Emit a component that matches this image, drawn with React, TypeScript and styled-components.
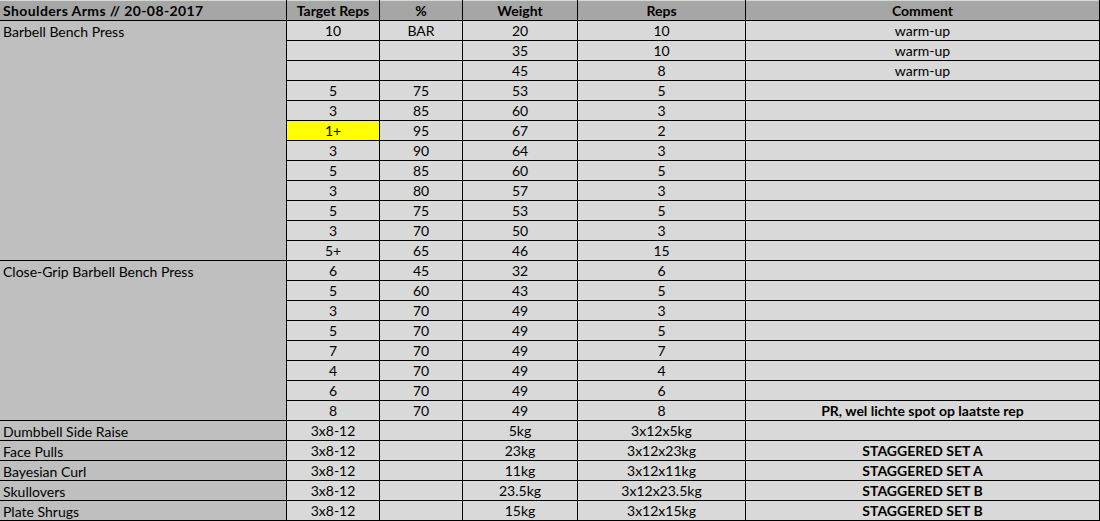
import React from "react";
import styled, { createGlobalStyle } from "styled-components";

const GlobalStyle = createGlobalStyle`
  html, body {
    margin: 0;
    padding: 0;
    background: #ffffff;
  }
  body {
    font-family: Lato, "Liberation Sans", sans-serif;
    font-size: 14px;
    color: #000;
  }
`;

type SetRow = {
  target: string;
  pct: string;
  weight: string;
  reps: string;
  comment?: string;
  highlight?: boolean;
  bold?: boolean;
};

type Exercise = {
  name: string;
  sets: SetRow[];
};

const exercises: Exercise[] = [
  {
    name: "Barbell Bench Press",
    sets: [
      { target: "10", pct: "BAR", weight: "20", reps: "10", comment: "warm-up" },
      { target: "", pct: "", weight: "35", reps: "10", comment: "warm-up" },
      { target: "", pct: "", weight: "45", reps: "8", comment: "warm-up" },
      { target: "5", pct: "75", weight: "53", reps: "5" },
      { target: "3", pct: "85", weight: "60", reps: "3" },
      { target: "1+", pct: "95", weight: "67", reps: "2", highlight: true },
      { target: "3", pct: "90", weight: "64", reps: "3" },
      { target: "5", pct: "85", weight: "60", reps: "5" },
      { target: "3", pct: "80", weight: "57", reps: "3" },
      { target: "5", pct: "75", weight: "53", reps: "5" },
      { target: "3", pct: "70", weight: "50", reps: "3" },
      { target: "5+", pct: "65", weight: "46", reps: "15" },
    ],
  },
  {
    name: "Close-Grip Barbell Bench Press",
    sets: [
      { target: "6", pct: "45", weight: "32", reps: "6" },
      { target: "5", pct: "60", weight: "43", reps: "5" },
      { target: "3", pct: "70", weight: "49", reps: "3" },
      { target: "5", pct: "70", weight: "49", reps: "5" },
      { target: "7", pct: "70", weight: "49", reps: "7" },
      { target: "4", pct: "70", weight: "49", reps: "4" },
      { target: "6", pct: "70", weight: "49", reps: "6" },
      {
        target: "8",
        pct: "70",
        weight: "49",
        reps: "8",
        comment: "PR, wel lichte spot op laatste rep",
        bold: true,
      },
    ],
  },
  {
    name: "Dumbbell Side Raise",
    sets: [{ target: "3x8-12", pct: "", weight: "5kg", reps: "3x12x5kg" }],
  },
  {
    name: "Face Pulls",
    sets: [
      { target: "3x8-12", pct: "", weight: "23kg", reps: "3x12x23kg", comment: "STAGGERED SET A", bold: true },
    ],
  },
  {
    name: "Bayesian Curl",
    sets: [
      { target: "3x8-12", pct: "", weight: "11kg", reps: "3x12x11kg", comment: "STAGGERED SET A", bold: true },
    ],
  },
  {
    name: "Skullovers",
    sets: [
      { target: "3x8-12", pct: "", weight: "23.5kg", reps: "3x12x23.5kg", comment: "STAGGERED SET B", bold: true },
    ],
  },
  {
    name: "Plate Shrugs",
    sets: [
      { target: "3x8-12", pct: "", weight: "15kg", reps: "3x12x15kg", comment: "STAGGERED SET B", bold: true },
    ],
  },
];

const Sheet = styled.div`
  display: grid;
  grid-template-columns: 286px 92px 82px 114px 167px 353px;
  grid-template-rows: 20px;
  grid-auto-rows: 19px;
  gap: 1px;
  width: 1100px;
  box-sizing: border-box;
  padding: 0 1px 1px 0;
  background: #000;
`;

const HeaderCell = styled.div<{ $left?: boolean }>`
  background: #a6a6a6;
  border-top: 1px solid #d3dbd3;
  font-weight: bold;
  display: flex;
  align-items: flex-end;
  justify-content: ${(p) => (p.$left ? "flex-start" : "center")};
  letter-spacing: ${(p) => (p.$left ? "0.4px" : "normal")};
  padding: 0 3px 1px;
  line-height: 17px;
  white-space: nowrap;
  overflow: hidden;
`;

const NameCell = styled.div<{ $span: number }>`
  grid-row: span ${(p) => p.$span};
  background: #bfbfbf;
  padding: 2px 3px 0;
  line-height: 17px;
  white-space: nowrap;
`;

const Cell = styled.div<{ $highlight?: boolean; $bold?: boolean }>`
  background: ${(p) => (p.$highlight ? "#ffff00" : "#d9d9d9")};
  font-weight: ${(p) => (p.$bold ? "bold" : "normal")};
  display: flex;
  align-items: flex-end;
  justify-content: center;
  padding-bottom: 1px;
  line-height: 17px;
  white-space: nowrap;
  overflow: hidden;
`;

const App: React.FC = () => {
  return (
    <>
      <GlobalStyle />
      <Sheet>
        <HeaderCell $left>Shoulders Arms // 20-08-2017</HeaderCell>
        <HeaderCell>Target Reps</HeaderCell>
        <HeaderCell>%</HeaderCell>
        <HeaderCell>Weight</HeaderCell>
        <HeaderCell>Reps</HeaderCell>
        <HeaderCell>Comment</HeaderCell>
        {exercises.map((ex) => (
          <React.Fragment key={ex.name}>
            <NameCell $span={ex.sets.length}>{ex.name}</NameCell>
            {ex.sets.map((s, i) => (
              <React.Fragment key={i}>
                <Cell $highlight={s.highlight}>{s.target}</Cell>
                <Cell>{s.pct}</Cell>
                <Cell>{s.weight}</Cell>
                <Cell>{s.reps}</Cell>
                <Cell $bold={s.bold}>{s.comment}</Cell>
              </React.Fragment>
            ))}
          </React.Fragment>
        ))}
      </Sheet>
    </>
  );
};

export default App;
